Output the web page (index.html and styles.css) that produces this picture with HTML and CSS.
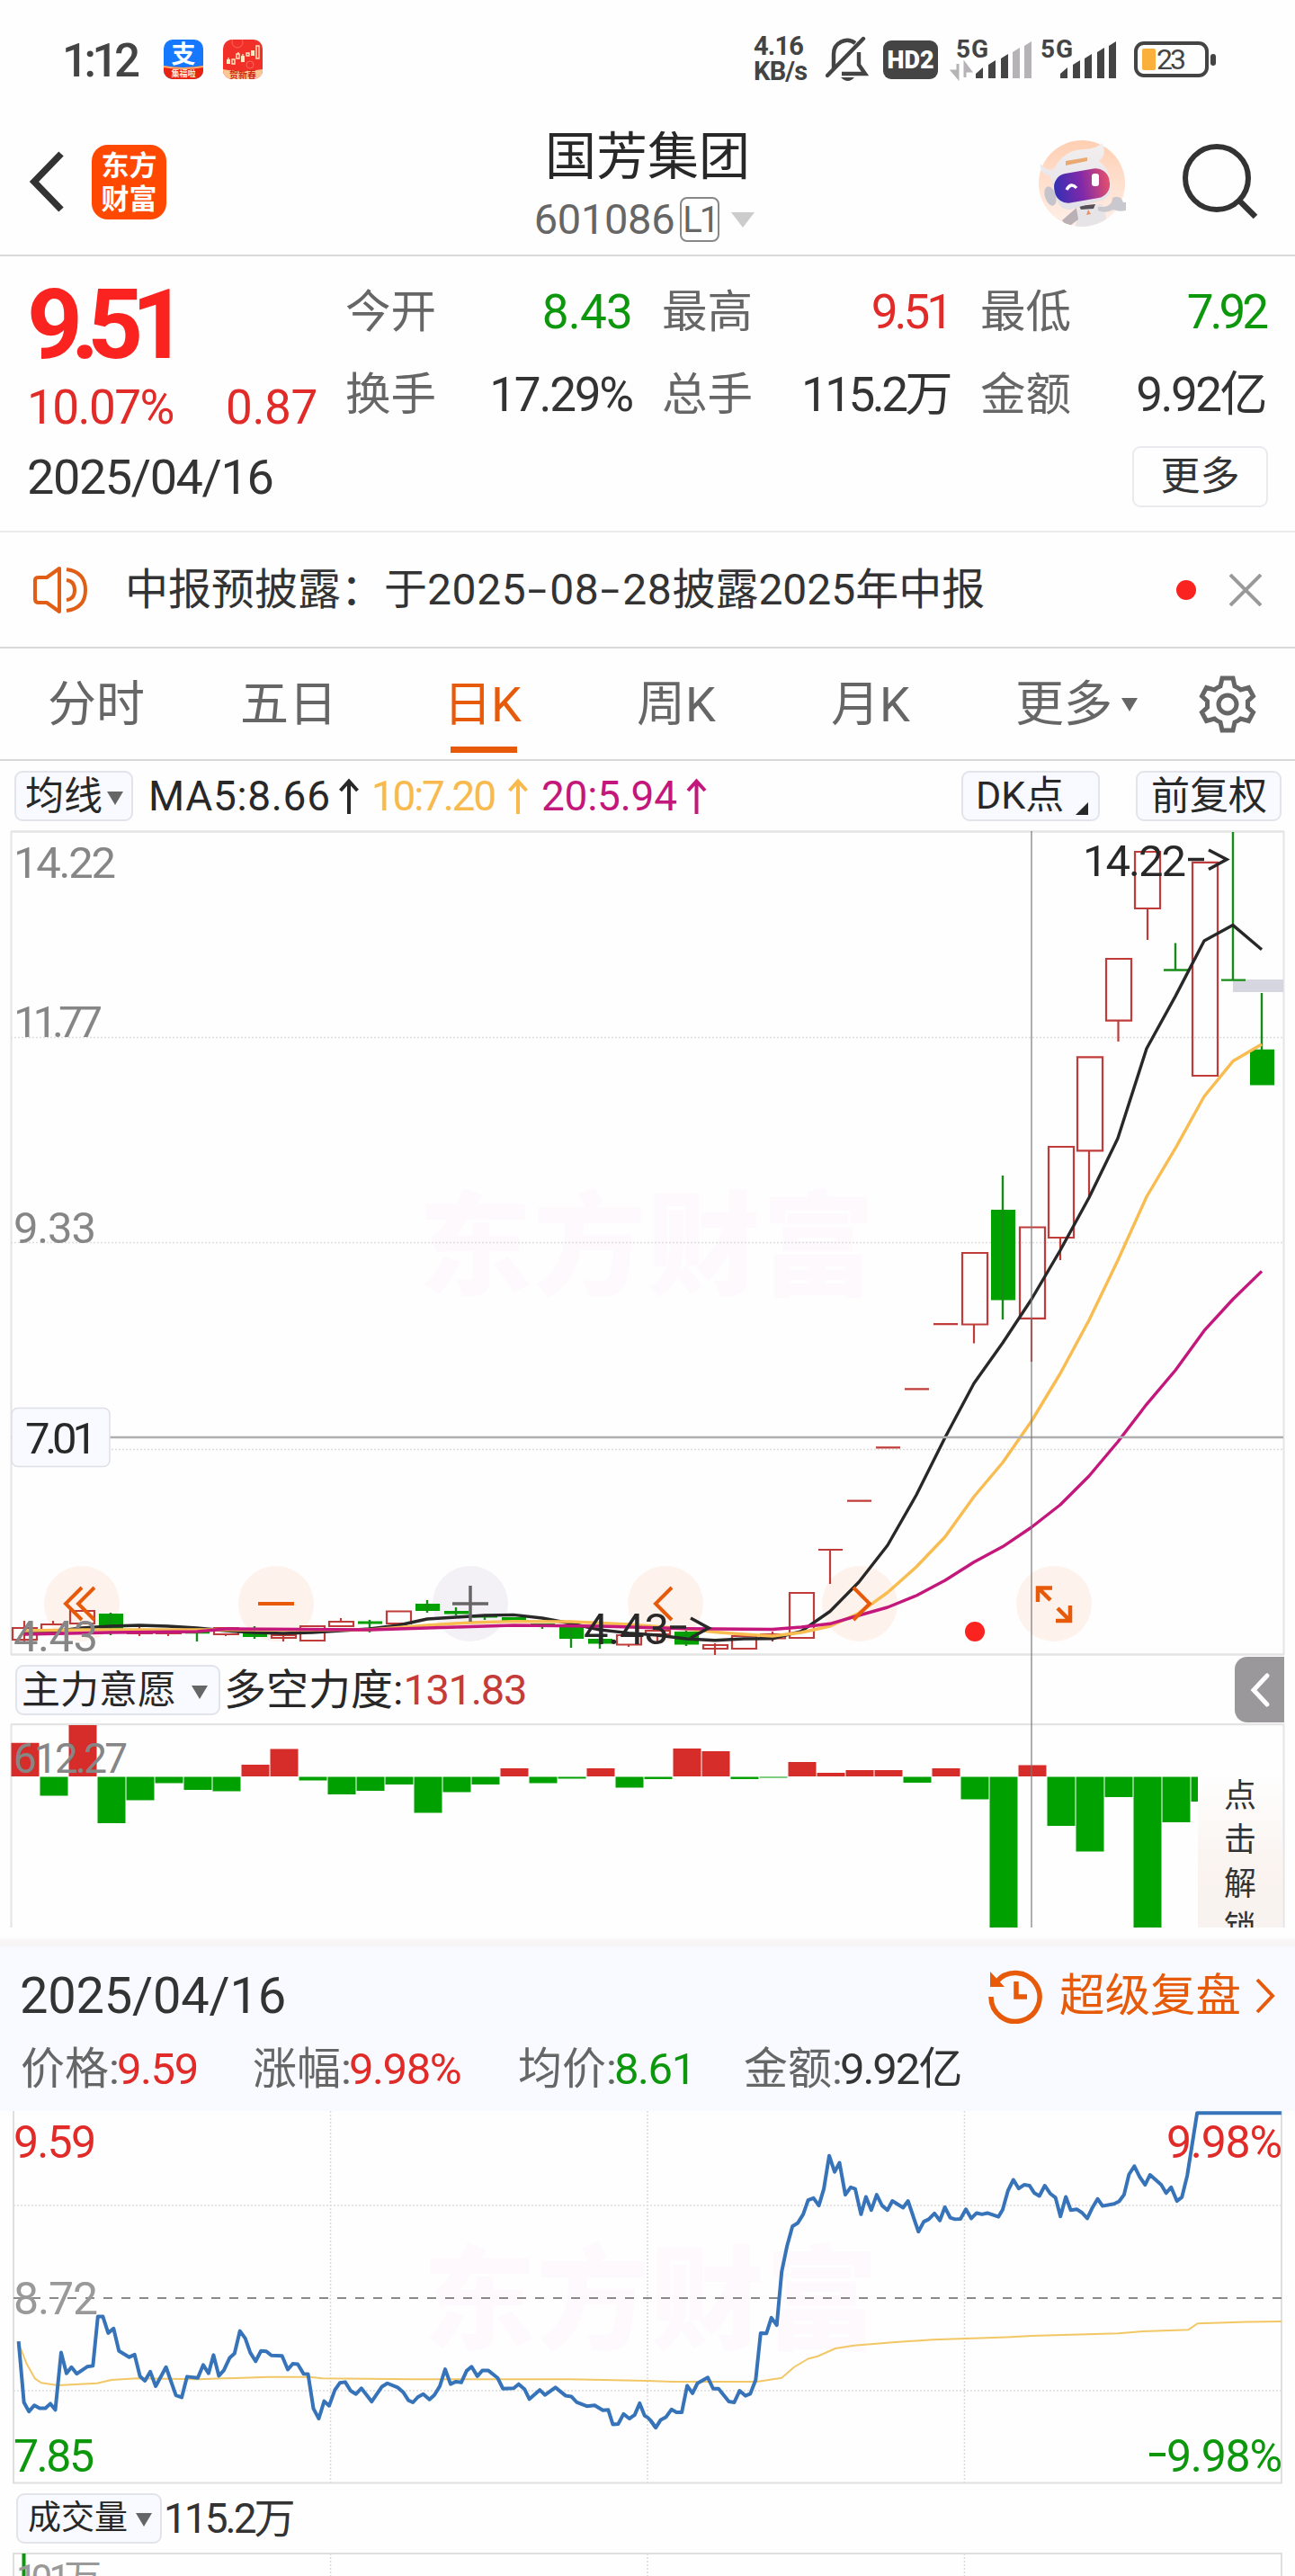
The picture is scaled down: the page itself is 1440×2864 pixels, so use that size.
FILE: index.html
```html
<!DOCTYPE html>
<html lang="zh-CN">
<head>
<meta charset="utf-8">
<title>国芳集团 601086</title>
<link rel="stylesheet" href="styles.css">
</head>
<body>
<div class="status">
  <span class="clock">1:12</span>
  <svg class="app" viewBox="0 0 44 44">
    <defs><clipPath id="ra"><rect width="44" height="44" rx="10"/></clipPath></defs>
    <g clip-path="url(#ra)"><rect width="44" height="44" fill="#1678ff"/><path d="M0 29Q22 33 44 29V44H0z" fill="#e8230f"/><path d="M0 29Q22 33 44 29v2Q22 35 0 31z" fill="#ffb070"/></g>
    <text x="22" y="26" class="zhi">支</text><text x="22" y="41" class="tiny">集福啦</text>
  </svg>
  <svg class="app second" viewBox="0 0 44 44">
    <g clip-path="url(#ra)"><rect width="44" height="44" fill="#f2302a"/><circle cx="16" cy="3" r="6" fill="none" stroke="#f9685c"/><circle cx="30" cy="28" r="4" fill="none" stroke="#f9685c"/><path d="M0 33Q22 37 44 33V44H0z" fill="#fbc794"/>
    <path d="M4 22h4v5H4zM20 18h4v7h-4zM31 12h4v6h-4z" fill="#ffe9c0"/><path d="M10 22h3v5h-3zM15 16h3v5h-3zM26 15h3v3h-3zM37 7h3v14h-3zM6 20v2M17 14v2M22 16v2" fill="none" stroke="#ffe9c0" stroke-width="1.4"/></g>
    <text x="22" y="43" class="tiny red">贺新春</text>
  </svg>
  <div class="sys">
    <div class="rate"><span>4.16</span><span>KB/s</span></div>
    <svg class="bell" viewBox="0 0 48 52" fill="none" stroke="#444" stroke-width="4.4"><path d="M9 36V20a15 15 0 0 1 24-12M37 18v14l7 10H18"/><path d="M2 44L42 3" stroke-linecap="round"/><path d="M17 46h15q-7 8-15 0z" fill="#444" stroke="none"/></svg>
    <span class="hd">HD2</span>
    <svg class="sig" viewBox="0 0 90 46"><text x="4" y="21" textLength="36">5G</text><path d="M6 28v15M6 43l-6-7h6zM14 43V28l6 8h-6z" fill="#b5b3b5" stroke="#b5b3b5" stroke-width="3"/><g fill="#444"><path d="M26 43v-4l8-7v12h-8zM40 44V29l8-5v20zM54 44V22l8-5v27z"/><path fill="#b5b3b5" d="M67 44V15l8-5v34zM80 44V8l8-5v41z"/></g></svg>
    <svg class="sig two" viewBox="0 0 86 46"><text x="0" y="21" textLength="36">5G</text><g fill="#444"><path d="M22 43v-4l8-7v12h-8zM36 44V29l8-5v20zM49 44V22l8-5v27zM63 44V15l8-5v34zM76 44V8l8-5v41z"/></g></svg>
    <svg class="bat" viewBox="0 0 92 40"><rect x="2" y="2" width="79" height="36" rx="9" fill="none" stroke="#444" stroke-width="4"/><rect x="9" y="8" width="15" height="24" rx="2" fill="#fbb03b"/><rect x="85" y="14" width="6" height="13" rx="3" fill="#444"/><text x="25" y="31" textLength="33">23</text></svg>
  </div>
</div>

<header class="header">
  <svg class="back" viewBox="0 0 40 70"><path d="M36 4L6 35L36 66" fill="none" stroke="#333" stroke-width="7.5"/></svg>
  <div class="logo"><span>东方</span><span>财富</span></div>
  <div class="title">
    <h1>国芳集团</h1>
    <div class="code"><span class="num">601086</span><span class="lv">L1</span><i class="tri light"></i></div>
  </div>
  <svg class="robot" viewBox="0 0 100 98">
    <defs><linearGradient id="rb" x1="0" y1="0" x2="0" y2="1"><stop offset="0" stop-color="#ffcfb2"/><stop offset="1" stop-color="#fff0ea"/></linearGradient>
    <linearGradient id="vs" x1="0" y1="0" x2="1" y2="0"><stop offset="0" stop-color="#3430b4"/><stop offset=".5" stop-color="#8129a9"/><stop offset="1" stop-color="#e4506b"/></linearGradient>
    <linearGradient id="hs" x1="0" y1="0" x2="0" y2="1"><stop offset="0" stop-color="#f3efef"/><stop offset="1" stop-color="#e2e0e8"/></linearGradient>
    <clipPath id="rc"><circle cx="50" cy="49" r="48"/></clipPath></defs>
    <circle cx="50" cy="49" r="48" fill="url(#rb)"/>
    <g clip-path="url(#rc)"><path d="M46 74l27-2 7 26H43z" fill="#e6e4e7"/><path d="M47 74l18-2-2 5-14 1z" fill="#55505a"/><path d="M44 76L28 90l6 8 12-9z" fill="#b9b1b5"/><path d="M55 84l5-1-3-5z" fill="#e79468"/></g>
    <path d="M68 75q16 1 16-10 9-4 12 5l3 0v9q-8 2-14-1-9 5-17 1z" fill="#c9c8ce"/>
    <path d="M15 41Q2 37 4 27q7 9 15 6Q29 12 52 11q13 0 21-7 5 13-4 20 11 7 13 24 2 15-8 19L37 78q-11 1-15-11z" fill="url(#hs)"/>
    <ellipse cx="15" cy="63" rx="6" ry="11" fill="#c5c4cc" transform="rotate(-18 15 63)"/>
    <rect x="19" y="35" width="62" height="33" rx="15" fill="url(#vs)" transform="rotate(-10 50 51)"/>
    <path d="M33 56q5-9 11-2" stroke="#fff" stroke-width="3.4" fill="none"/><rect x="61" y="38" width="8" height="14" rx="3" fill="#fff"/><path d="M32 24l24-4v4l-24 5z" fill="#e8aa72"/>
  </svg>
  <svg class="search" viewBox="0 0 90 90" fill="none" stroke="#333"><circle cx="38" cy="38" r="35" stroke-width="6"/><path d="M63 63L81 81" stroke-width="6.5"/></svg>
</header>

<section class="quote">
  <div class="left">
    <div class="price">9.51</div>
    <div class="chg"><span>10.07%</span><span class="diff">0.87</span></div>
  </div>
  <dl class="facts">
    <dt>今开</dt><dd class="g">8.43</dd><dt>最高</dt><dd class="r n951">9.51</dd><dt>最低</dt><dd class="g n792">7.92</dd>
    <dt>换手</dt><dd class="pc">17.29%</dd><dt>总手</dt><dd class="vol">115.2万</dd><dt>金额</dt><dd class="n992">9.92亿</dd>
  </dl>
  <div class="dateline"><span class="date">2025/04/16</span><button class="more">更多</button></div>
</section>

<section class="notice">
  <svg class="speaker" viewBox="0 0 64 54" fill="none" stroke="#e05e15" stroke-width="4"><path d="M3 16q0-3 4-3h9L30 3v48L16 41H7q-4 0-4-4z" stroke-linejoin="round"/><path d="M38 16q9 1 9 11t-9 11M38 4q21 3 21 23t-21 23"/></svg>
  <span class="msg">中报预披露：于<span class="dt">2025<b>-</b>08<b>-</b>28</span>披露2025年中报</span>
  <i class="dot"></i>
  <svg class="close" viewBox="0 0 36 36"><path d="M1 1L35 35M35 1L1 35" stroke="#999" stroke-width="4"/></svg>
</section>

<nav class="tabs">
  <a>分时</a><a>五日</a><a class="on">日K</a><a>周K</a><a>月K</a><a class="m">更多<i class="tri"></i></a>
  <svg class="gear" viewBox="-32 -32 64 64" fill="none" stroke="#666" stroke-width="5"><circle r="10"/><path stroke-linejoin="miter" d="M-6 -29H6L8 -20Q12 -18.500 14.500 -16L23.500 -18.500L28.500 -9L22.500 -3.500V3.500L28.500 9L23.500 18.500L14.500 16Q12 18.500 8 20L6 29H-6L-8 20Q-12 18.500 -14.500 16L-23.500 18.500L-28.500 9L-22.500 3.500V-3.500L-28.500 -9L-23.500 -18.500L-14.500 -16Q-12 -18.500 -8 -20Z"/></svg>
</nav>

<section class="kline">
  <div class="mabar">
    <button class="pill ma">均线<i class="tri"></i></button>
    <svg class="mavals" viewBox="160 847 640 77">
      <g font-size="46"><text x="165" y="902" fill="#282828" textLength="202">MA5:8.66</text><text x="413" y="902" fill="#f8b94d" textLength="139">10:7.20</text><text x="602" y="902" fill="#c4177c" textLength="151">20:5.94</text></g>
      <g fill="none" stroke-width="4"><path d="M388 906V870M378.500 880L388 869.500L397.500 880" stroke="#282828"/><path d="M576 906V870M566.500 880L576 869.500L585.500 880" stroke="#f8b94d"/><path d="M774.500 906V870M765 880L774.500 869.500L784 880" stroke="#c4177c"/></g>
    </svg>
    <button class="pill dk">DK点<i class="corner"></i></button>
    <button class="pill fq">前复权</button>
  </div>

  <svg class="chart" viewBox="0 923 1440 918">
    <text x="466" y="1430" font-size="125" class="wm" textLength="506">东方财富</text>
    <path d="M12 924.500H1428M12 1839.500H1428" stroke="#e4e4e4" stroke-width="2.500"/>
    <path d="M12.500 924V1840M1427.500 924V1840" stroke="#e4e4e4" stroke-width="2"/>
    <path d="M12 1153.500H1427M12 1381.500H1427M12 1611.500H1427" stroke="#dedede" stroke-dasharray="2 2" stroke-width="1.500"/>
    <g fill="#fef2ec"><circle cx="91" cy="1783" r="42"/><circle cx="307" cy="1783" r="42"/><circle cx="523" cy="1783" r="42" fill="#f4f1f6"/><circle cx="740" cy="1783" r="42"/><circle cx="956" cy="1783" r="42"/><circle cx="1172" cy="1783" r="42"/></g>
    <rect x="1371" y="1089" width="56" height="14" fill="#d5d6df"/>
    <path class="rd" d="M1326 958.800h28v237.200h-28zM1262 947h28v63h-28zM1276 1010v35M1230 1066h28v68.700h-28zM1243.500 1135v23M1198 1175.400h28v104h-28zM1211 1280v50M1166 1275h28v101h-28zM1179 1376v25M1134 1364.500h28v101.300h-28zM1147 1466v48M1070 1393h28v79.500h-28zM1083 1473v20.500M1038 1472.200h27M1006 1544.300h27M974 1609.400h27M942 1668.700h27M910 1723h27M923 1723v38M878 1771h27v50h-27zM846 1817h27v4.500h-27zM859 1814v11M814 1819h27v14h-27zM782 1829h27v4h-27zM795 1827v13M718 1813h27v4h-27zM731 1817v9M686 1818h27v10.500h-27zM699 1829v2M430 1791.500h27v13.500h-27zM366 1803h27v5h-27zM379 1799v4M334 1808h27v16h-27zM302 1818h27v3h-27zM315 1815v10M238 1810h27v7h-27zM251 1817v2M174 1813h27v3h-27zM187 1816v3M142 1814h27v2h-27zM155 1809v10M78 1791h27v14h-27zM46 1806h27v10h-27zM59 1802v4M14 1810h27v13h-27zM27 1802v23"/>
    <path class="gr" d="M1390 1166.700h27v39.800h-27zM1102 1345h27v100.400h-27zM750 1814h27v14.500h-27zM654 1822h27v5.500h-27zM622 1809h27v13h-27zM590 1805h27v2h-27zM558 1798h27v4h-27zM526 1796h27v2.500h-27zM494 1791h27v3.600h-27zM462 1783h27v8h-27zM398 1802.600h27v3h-27zM270 1815h27v5h-27zM206 1813.700h27v2.500h-27zM110 1794h27v16.700h-27z"/>
    <path class="gw" d="M1403 1104v63M1371 925v165M1358 1089.600h27M1307 1048.400v30M1294 1078.500h27M1115 1307v160M763 1813v17M667 1820v13M635 1809v23M603 1805v6M539 1796v5M507 1787v9M475 1779v14M411 1801v14M283 1808v14M219 1813v12M123 1793v25"/>
    <polyline class="l" stroke="#282828" points="27,1816 59,1814 91,1810 123,1808 155,1807 187,1808 219,1810 251,1813 283,1815 315,1816 347,1815 379,1813 411,1811 443,1807 475,1800 507,1798 539,1796 571,1795.400 603,1799 635,1805 667,1812 699,1815.600 731,1818 763,1822 795,1823.700 827,1822 859,1821.800 891,1813.700 923,1791.500 955,1759 987,1718 1019,1662 1051,1598 1083,1538 1115,1493 1147,1444.500 1179,1390 1211,1331.500 1243,1265.600 1275,1165.700 1307,1107.600 1339,1046 1371,1028.600 1403,1055.700"/>
    <polyline class="l" stroke="#f8bc50" points="27,1813 91,1812 219,1812 411,1812 475,1807 523,1804 571,1802.600 635,1803 699,1806 763,1811 795,1814.500 827,1817 859,1819 891,1815 923,1808 955,1793.500 987,1770.500 1019,1742 1051,1708.500 1083,1664 1115,1626 1147,1580 1179,1527 1211,1467.700 1243,1401.300 1275,1330.500 1307,1276.700 1339,1219 1371,1179.800 1403,1161"/>
    <polyline class="l" stroke="#c4177c" points="27,1817 123,1815 219,1814 251,1811 411,1812 507,1809 571,1807 667,1808 763,1810.700 859,1811.500 891,1809 923,1805.300 955,1796 987,1787 1019,1774 1051,1757 1083,1736.800 1115,1719.600 1147,1698 1179,1673 1211,1641 1243,1603 1275,1561.300 1307,1523.500 1339,1479.400 1371,1444.500 1403,1413.400"/>
    <path d="M12 1598H1427" stroke="#b0b0b2" stroke-width="2.500"/>
    <rect x="13" y="1565.500" width="109" height="65" rx="7" fill="#f8faff" stroke="#dfe0e6" stroke-width="1.500"/>
    <g font-size="49" fill="#868686"><text x="15" y="976" textLength="114">14.22</text><text x="15" y="1153" textLength="99">11.77</text><text x="15" y="1382" textLength="92">9.33</text><text x="15" y="1836" textLength="94">4.43</text></g>
    <g font-size="49" fill="#282828"><text x="28" y="1616" textLength="80">7.01</text><text x="1204" y="974" textLength="115">14.22</text><text x="649" y="1828" textLength="95">4.43</text></g>
    <path d="M1321 955.500h18M1344 945l20 10.500-20 11M745 1809h18M768 1799l20 11-20 11" stroke="#282828" stroke-width="3.600" fill="none"/>
    <g stroke="#e65a0a" stroke-width="4" fill="none"><path d="M91 1765L73 1783L91 1801M105 1765L87 1783L105 1801M287 1783H327M747 1765L729 1783L747 1801M949 1765L967 1783L949 1801"/><path d="M1154 1781V1765.500H1170M1155 1766L1168 1779M1174 1802H1190V1785M1189 1801L1176 1788" stroke-width="4.500"/></g>
    <path d="M503 1783H543M523 1763V1803" stroke="#666" stroke-width="3.500"/>
    <circle cx="1084" cy="1814" r="11" fill="#fa2320"/>
  </svg>

  <div class="subbar">
    <button class="pill zl">主力意愿<i class="tri"></i></button>
    <span class="force">多空力度:<em>131.83</em></span>
    <span class="fold"><svg viewBox="0 0 24 40"><path d="M19 4L4 20L19 36" fill="none" stroke="#fff" stroke-width="5" stroke-linecap="round"/></svg></span>
  </div>

  <div class="bars">
    <svg viewBox="0 1916 1440 227">
      <path d="M12 1917H1428" stroke="#e4e4e4" stroke-width="2.500"/><path d="M12.500 1917V2143M1427.500 1917V2143" stroke="#e4e4e4" stroke-width="2"/>
      <path fill="#d62c2a" d="M12.500 1937.700h31V1975h-31zM76.500 1918h31v57h-31zM268.500 1962h31v13h-31zM300.500 1944.600h31V1975h-31zM556.500 1966h31v9h-31zM652.500 1966h31v9h-31zM748.500 1944h31v31h-31zM780.500 1947h31v28h-31zM876.500 1959h31v16h-31zM908.500 1971h31v4h-31zM940.500 1968h31v7h-31zM972.500 1968h31v7h-31zM1036.500 1966h31v9h-31zM1132.500 1962.600h31V1975h-31z"/>
      <path fill="#00a000" d="M44.500 1975.500h31v21h-31zM108.500 1975.500h31v51.500h-31zM140.500 1975.500h31v26h-31zM172.500 1975.500h31v7h-31zM204.500 1975.500h31v14.500h-31zM236.500 1975.500h31v16h-31zM332.500 1975.500h31v4h-31zM364.500 1975.500h31v19.500h-31zM396.500 1975.500h31v15.500h-31zM428.500 1975.500h31v8.500h-31zM460.500 1975.500h31v40h-31zM492.500 1975.500h31v17h-31zM524.500 1975.500h31v8.500h-31zM588.500 1975.500h31v7h-31zM620.500 1975.500h31v2h-31zM684.500 1975.500h31v12h-31zM716.500 1975.500h31v2.500h-31zM812.500 1975.500h31v2.500h-31zM844.500 1975.500h31v1h-31zM1004.500 1975.500h31v6.500h-31zM1068.500 1975.500h31v25h-31zM1100.500 1975.500h31V2143h-31zM1164.500 1975.500h31V2030h-31zM1196.500 1975.500h31v83h-31zM1228.500 1975.500h31v22.500h-31zM1260.500 1975.500h31V2143h-31zM1292.500 1975.500h31V2026h-31zM1324.500 1975.500h7.500V2003h-7.500z"/>
      <text x="15" y="1971" font-size="46" fill="#868686" textLength="127">612.27</text>
    </svg>
    <div class="unlock"><span>点</span><span>击</span><span>解</span><span>锁</span></div>
  </div>
  <i class="cross"></i>
</section>

<section class="review">
  <div class="rtop"><span class="rdate">2025/04/16</span>
    <a class="replay"><svg viewBox="0 0 62 62" fill="none" stroke="#e65a0a"><path d="M10 15.500A27 27 0 1 1 4 32" stroke-width="5.500"/><path d="M3 4V21H19z" fill="#e65a0a" stroke="none"/><path d="M32 15V32H44" stroke-width="5.500"/></svg>超级复盘<svg class="go" viewBox="0 0 24 40"><path d="M3 2L20 20L3 38" fill="none" stroke="#e65a0a" stroke-width="4"/></svg></a>
  </div>
  <div class="rstats">
    <span>价格:<em class="r">9.59</em></span><span>涨幅:<em class="r">9.98%</em></span><span>均价:<em class="g">8.61</em></span><span>金额:<em>9.92亿</em></span>
  </div>
</section>

<svg class="intraday" viewBox="0 2347 1440 415">
  <text x="470" y="2602" font-size="125" class="wm" textLength="506">东方财富</text>
  <path d="M15 2347V2760.500H1425V2347" fill="none" stroke="#dfdfe0" stroke-width="2"/>
  <path d="M15 2452H1425M15 2658H1425M367.500 2347V2760M720 2347V2760M1072.500 2347V2760" stroke="#dcdcdc" stroke-width="1.500" stroke-dasharray="2 2"/>
  <path d="M15 2555H1425" stroke="#8a8a8a" stroke-width="2" stroke-dasharray="10 10"/>
  <g font-size="50"><text x="15" y="2399" fill="#e02b28" textLength="92">9.59</text><text x="15" y="2573" fill="#999" textLength="94">8.72</text><text x="15" y="2748" fill="#0c970c" textLength="90">7.85</text><text x="1297" y="2399" fill="#e02b28" textLength="129">9.98%</text><text x="1297" y="2748" fill="#0c970c" textLength="129">9.98%</text></g>
  <path d="M1278 2729H1296" stroke="#0c970c" stroke-width="4"/>
  <g class="ln" transform="translate(0 2140) scale(.459184 .461735)">
    <polyline class="avg" points="48,1015 65,1058 85,1093 100,1103 140,1109 235,1104 270,1096 330,1092 480,1094 650,1089 750,1089 780,1092 1000,1094 1380,1094 1568,1098 1628,1100 1833,1100 1893,1091 1923,1065 1957,1045 1980,1039 2023,1020 2068,1013 2168,1005 2258,999 2438,993 2498,990 2708,984 2768,979 2878,975 2900,960 3018,956 3103,955"/>
    <polyline points="45,1003 58,1150 70,1172 83,1157 96,1164 110,1164 122,1153 134,1168 148,1030 161,1080 173,1065 186,1081 211,1064 225,1062 237,943 249,943 262,983 275,972 288,1026 313,1041 326,1035 339,1087 351,1098 364,1076 377,1111 402,1065 426,1133 440,1138 453,1088 479,1091 492,1060 505,1080 517,1036 530,1086 542,1073 556,1043 568,1032 581,978 594,996 606,1030 619,1051 632,1026 645,1027 657,1037 683,1038 697,1071 709,1057 721,1058 735,1081 746,1082 759,1165 772,1189 785,1147 797,1158 811,1120 823,1103 836,1101 849,1122 862,1130 875,1116 900,1148 925,1112 938,1104 963,1114 976,1125 989,1145 1000,1150 1012,1137 1025,1130 1040,1143 1052,1132 1065,1111 1078,1070 1091,1106 1104,1100 1117,1102 1130,1074 1142,1064 1156,1087 1168,1073 1182,1073 1205,1091 1218,1117 1244,1116 1256,1106 1270,1118 1282,1142 1307,1120 1320,1132 1345,1114 1370,1134 1384,1136 1397,1150 1421,1159 1440,1157 1460,1169 1473,1168 1484,1203 1497,1202 1510,1178 1524,1189 1537,1180 1549,1152 1561,1182 1568,1186 1576,1194 1588,1211"/>
  </g>
  <g class="ln" transform="translate(720 2140) scale(.459184 .461735)">
    <polyline points="8,1194 20,1211 32,1192 45,1185 58,1167 70,1174 83,1174 96,1110 109,1128 121,1104 146,1090 159,1117 172,1117 197,1148 210,1150 223,1122 237,1134 249,1129 262,1096 274,983 288,984 300,946 313,964 325,835 338,773 351,726 364,718 377,697 389,663 402,658 415,676 427,636 440,556 453,595 465,573 479,650 492,632 503,636 517,697 529,655 542,687 555,650 568,676 581,687 593,665 619,681 631,665 656,739 669,715 681,709 695,695 708,712 720,680 733,705 745,709 758,708 771,685 784,707 797,694 810,697 823,694 850,703 860,686 873,640 886,614 899,635 912,626 925,628 937,646 949,653 962,628 975,647 988,657 1000,702 1013,655 1025,687 1040,685 1052,693 1065,707 1078,680 1090,660 1102,677 1130,672 1142,666 1154,650 1166,601 1179,581 1192,607 1205,626 1217,602 1244,626 1256,646 1268,632 1282,665 1294,656 1307,604 1331,453 1535,453"/>
  </g>
</svg>

<div class="volbar"><button class="pill cj">成交量<i class="tri"></i></button><span>115.2万</span></div>
<svg class="volume" viewBox="0 2838 1440 26">
  <path d="M15 2864V2839H1425V2864" fill="none" stroke="#dfdfe0" stroke-width="2"/><path d="M367.500 2839V2864M720 2839V2864M1072.500 2839V2864" stroke="#dcdcdc" stroke-width="1.500" stroke-dasharray="2 2"/>
  <path d="M26.500 2839V2864" stroke="#0c970c" stroke-width="4"/>
  <text x="18" y="2881" font-size="42" fill="#999" textLength="95">10.1万</text>
</svg>
</body>
</html>
```
FILE: styles.css
```css
* { box-sizing: border-box; }
body { margin: 0; width: 1440px; height: 2864px; overflow: hidden; background: #fefefe; color: #333; font-family: Roboto, "Noto Sans CJK SC", sans-serif; }
svg { display: block; flex: none; }
button { font: inherit; color: inherit; padding: 0; margin: 0; }
em, i { font-style: normal; }
.r { color: #e02b28; }
.g { color: #0c970c; }

.status { height: 132px; padding-left: 69px; display: flex; align-items: center; color: #444; }
.clock { width: 113px; font-size: 51px; font-weight: 500; letter-spacing: -4.5px; line-height: 60px; padding-top: 3px; }
.app { width: 44px; height: 44px; }
.second { margin-left: 22px; }
.zhi { font-size: 27px; font-weight: 700; fill: #fff; text-anchor: middle; }
.tiny { font-size: 9px; font-weight: 700; fill: #ffe9d5; text-anchor: middle; }
.tiny.red { fill: #d02a18; font-size: 10px; }
.sys { margin-left: 546px; display: flex; align-items: center; }
.rate { width: 80px; height: 58px; display: flex; flex-direction: column; font-size: 29px; font-weight: 700; line-height: 28px; letter-spacing: -.8px; }
.bell { width: 48px; height: 52px; }
.hd { margin-left: 16px; width: 61px; height: 43px; border-radius: 9px; background: #444; color: #fff; font-size: 27px; font-weight: 900; line-height: 44px; text-align: center; }
.sig { width: 90px; height: 46px; margin-left: 16px; overflow: visible; }
.sig.two { width: 86px; margin-left: 8px; }
.sig text { font-size: 28px; font-weight: 700; fill: #444; }
.bat { width: 92px; height: 40px; margin-left: 18px; }
.bat text { font-size: 32px; fill: #444; }

.header { height: 153px; border-bottom: 2px solid #d9d9d9; padding-left: 32px; display: flex; align-items: flex-start; }
.back { width: 40px; height: 70px; margin-top: 35px; }
.logo { margin: 29px 0 0 30px; width: 83px; height: 83px; border-radius: 18px; background: #ff4800; color: #fff; display: flex; flex-direction: column; justify-content: center; align-items: center; font-size: 31px; font-weight: 700; line-height: 37px; }
.title { width: 400px; margin-left: 335px; display: flex; flex-direction: column; align-items: center; }
.title h1 { margin: 11px 0 0; font-size: 57px; font-weight: 400; line-height: 64px; color: #282828; }
.code { display: flex; align-items: center; height: 50px; margin: 12px 0 0 -7px; color: #666; font-size: 47px; line-height: 50px; letter-spacing: -.3px; }
.lv { margin-left: 6px; width: 44px; height: 50px; border: 2px solid #888; border-radius: 8px; font-size: 40px; line-height: 48px; text-align: center; letter-spacing: -3px; }
.tri { display: inline-block; border: 9px solid transparent; border-top: 15px solid #666; border-bottom: 0; }
.tri.light { border-width: 17px 13px 0; border-top-color: #ccc; margin-left: 13px; }
.robot { width: 100px; height: 98px; margin: 23px 0 0 233px; }
.search { width: 90px; height: 90px; margin: 28px 0 0 62px; }

.quote { height: 307px; border-bottom: 2px solid #ececec; padding: 24px 30px 0 30px; display: grid; grid-template-columns: 354px 1fr; grid-template-rows: 183px 1fr; }
.price { height: 104px; font-size: 108px; font-weight: 700; line-height: 105px; letter-spacing: -13px; color: #fa2320; }
.chg { display: flex; align-items: center; height: 80px; font-size: 53px; line-height: 82px; letter-spacing: -1.5px; color: #e02b28; }
.diff { margin-left: 58px; letter-spacing: -.3px; }
.facts { margin: 0; display: grid; grid-template-columns: 98px 254px 98px 256px 98px 219px; grid-template-rows: 92px 92px; line-height: 76px; font-size: 53px; white-space: nowrap; }
.facts dt { font-size: 50.500px; color: #666; }
.facts dd { margin: 0; text-align: right; padding-right: 33px; letter-spacing: -.8px; }
.facts dd:nth-of-type(3n) { padding-right: 0; }
.facts dd:nth-of-type(3n+2) { padding-right: 34px; }
.facts .n951, .facts .n792 { letter-spacing: -4px; }
.facts .pc { letter-spacing: -2.200px; }
.facts .vol { letter-spacing: -3.500px; }
.facts .n992 { letter-spacing: -2.500px; }
.dateline { grid-column: 1 / 3; display: flex; justify-content: space-between; align-items: flex-start; }
.date { font-size: 54px; line-height: 80px; margin-top: -1px; letter-spacing: -1.400px; }
.more { width: 151px; height: 68px; margin-top: 4px; border: 2px solid #ebe9ee; border-radius: 9px; background: none; font-size: 44px; line-height: 62px; }

.notice { height: 129px; border-bottom: 2px solid #d9d9d9; padding-left: 36px; display: flex; align-items: center; }
.speaker { width: 64px; height: 54px; }
.msg { width: 1167px; padding-left: 39px; font-size: 48px; line-height: 70px; white-space: nowrap; }
.dt { letter-spacing: .6px; }
.dt b { font-weight: 400; display: inline-block; transform: scaleX(1.6); margin: 0 6px; }
.dot { width: 22px; height: 22px; border-radius: 50%; background: #fa2320; margin-left: 41px; }
.close { width: 36px; height: 36px; margin-left: 37px; }

.tabs { height: 125px; border-bottom: 2px solid #d9d9d9; padding-left: 53px; display: grid; grid-template-columns: 214px 230px 211px 216px 205px 204px 64px; align-items: center; font-size: 54px; line-height: 126px; color: #666; }
.tabs a { height: 124px; }
.tabs .on { color: #e65a0a; text-indent: -4px; letter-spacing: -1px; width: 82px; background: linear-gradient(#e65a0a, #e65a0a) 4px 109px / 74px 7px no-repeat; white-space: nowrap; }
.tabs .m .tri { margin-left: 10px; vertical-align: 11px; }
.gear { width: 64px; height: 64px; }

.kline { position: relative; height: 1297px; }
.mabar { height: 77px; display: flex; align-items: center; padding-left: 16px; }
.pill { height: 56px; border: 2px solid #e3e4eb; border-radius: 9px; background: #f8faff; color: #282828; font-size: 43px; line-height: 50px; white-space: nowrap; text-align: left; flex: none; }
.ma { width: 132px; padding-left: 10px; }
.ma .tri, .zl .tri, .cj .tri { vertical-align: 5px; margin-left: 5px; }
.mavals { width: 640px; height: 77px; margin-left: 12px; }
.dk { width: 154px; margin-left: 269px; padding-left: 14px; display: flex; }
.dk .corner { border-left: 14px solid transparent; border-bottom: 14px solid #282828; height: 14px; margin: 33px 0 0 13px; }
.fq { width: 162px; margin-left: 40px; padding-left: 15px; }
.chart { width: 1440px; height: 918px; }
.wm { font-weight: 900; fill: #fdf9fd; }
.rd { fill: none; stroke: #c03c3a; stroke-width: 2.200; }
.gr { fill: #00a000; }
.gw { fill: none; stroke: #188c18; stroke-width: 2.400; }
.l { fill: none; stroke-width: 3.400; stroke-linejoin: round; }
.subbar { height: 75px; display: flex; align-items: center; padding-left: 17px; }
.zl { width: 228px; padding-left: 5px; margin-top: 1px; }
.zl .tri { margin-left: 17px; }
.force { margin-left: 4px; width: 1124px; font-size: 47px; line-height: 70px; color: #282828; }
.force em { color: #c43b38; letter-spacing: -1.300px; }
.fold { width: 55px; height: 73px; background: #9b989c; border-radius: 14px 0 0 14px; display: flex; align-items: center; padding-left: 17px; }
.fold svg { width: 24px; height: 40px; }
.bars { position: relative; height: 227px; overflow: hidden; }
.unlock { position: absolute; left: 1332px; top: 57px; width: 94px; height: 170px; overflow: hidden; background: linear-gradient(#fefefe, #faf3ef 65%, #f8f3f0); display: flex; flex-direction: column; align-items: center; font-size: 36px; line-height: 49px; }
.unlock span { flex: none; }
.cross { position: absolute; left: 1146px; top: 78px; width: 2px; height: 1219px; background: rgba(120,120,122,.6); }

.review { height: 204px; padding-top: 22px; background: linear-gradient(#fefefe 0, #fefefe 10px, #f7f4f6 16px, #f7f4f6 21px, #f8faff 22px); }
.rtop { height: 108px; display: flex; justify-content: space-between; align-items: center; padding: 0 22px 0 22px; }
.rdate { font-size: 56px; letter-spacing: -.2px; }
.replay { display: flex; align-items: center; font-size: 50.500px; line-height: 70px; color: #e65a0a; }
.replay svg { width: 62px; height: 62px; margin-right: 18px; }
.replay .go { width: 24px; height: 40px; margin: 0 -1px 0 15px; }
.rstats { height: 74px; margin-top: -9px; padding-left: 23px; display: grid; grid-template-columns: 258px 295px 251px 300px; font-size: 49px; line-height: 74px; color: #666; white-space: nowrap; }
.rstats em { letter-spacing: -1.400px; margin-left: -3px; }
.rstats span:last-child em { color: #333; letter-spacing: -2px; }
.intraday { width: 1440px; height: 415px; }
.ln polyline { fill: none; stroke: #3673b8; stroke-width: 4px; vector-effect: non-scaling-stroke; stroke-linejoin: round; }
.ln .avg { stroke: #f2c766; stroke-width: 2px; }
.volbar { height: 76px; padding-left: 18px; display: flex; align-items: center; font-size: 46px; letter-spacing: -3px; }
.cj { width: 162px; font-size: 37px; letter-spacing: 0; padding-left: 11px; }
.cj .tri { margin-left: 9px; vertical-align: 3px; }
.volbar span { margin-left: 2px; line-height: 60px; }
.volume { width: 1440px; height: 26px; }
```
